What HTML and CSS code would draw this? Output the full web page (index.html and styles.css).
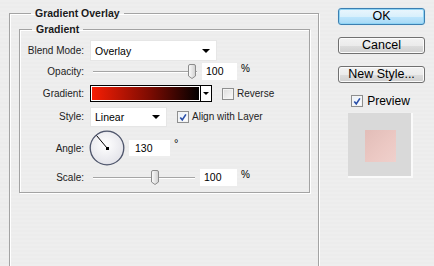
FILE: index.html
```html
<!DOCTYPE html>
<html lang="en">
<head>
  <meta charset="UTF-8">
  <title>Layer Style - Gradient Overlay</title>
  <link rel="stylesheet" href="styles.css">
</head>
<body>
  <div class="dialog">
    <fieldset class="group outer">
      <legend>Gradient Overlay</legend>
      <fieldset class="group inner">
        <legend>Gradient</legend>
        <div class="row r-blend">
          <span class="lbl">Blend Mode:</span>
          <div class="select wide"><span>Overlay</span><i class="arrow"></i></div>
        </div>
        <div class="row r-opacity">
          <span class="lbl">Opacity:</span>
          <div class="slider s-opacity">
            <div class="track"></div>
            <svg class="thumb" width="8" height="15" viewBox="0 0 8 15"><defs><linearGradient id="tg1" x1="0" y1="0" x2="1" y2="0"><stop offset="0" stop-color="#fdfdfd"/><stop offset="1" stop-color="#cfcfcf"/></linearGradient></defs><path d="M2 0.5h4a1.5 1.5 0 0 1 1.5 1.5v10l-3.5 2.5l-3.5-2.5v-10a1.5 1.5 0 0 1 1.5-1.5z" fill="url(#tg1)" stroke="#8c8c8c"/></svg>
          </div>
          <div class="field f-opacity">100</div>
          <span class="unit">%</span>
        </div>
        <div class="row r-gradient">
          <span class="lbl">Gradient:</span>
          <div class="swatch"></div>
          <div class="drop"><i class="arrow small"></i></div>
          <span class="check"></span>
          <span class="clabel">Reverse</span>
        </div>
        <div class="row r-style">
          <span class="lbl">Style:</span>
          <div class="select narrow"><span>Linear</span><i class="arrow"></i></div>
          <span class="check on"><svg width="11" height="11" viewBox="0 0 11 11"><path d="M2.5 5.5l2.2 2.6l4-6" fill="none" stroke="#2a4fa8" stroke-width="1.8"/></svg></span>
          <span class="clabel">Align with Layer</span>
        </div>
        <div class="row r-angle">
          <span class="lbl">Angle:</span>
          <svg class="dial" width="36" height="36" viewBox="0 0 36 36">
            <defs><radialGradient id="dg" cx="0.45" cy="0.4" r="0.6"><stop offset="0" stop-color="#ffffff"/><stop offset="1" stop-color="#e4e4ea"/></radialGradient></defs>
            <circle cx="18" cy="18" r="16.5" fill="url(#dg)" stroke="#c7c9d2" stroke-width="1"/>
            <circle cx="18" cy="18" r="16.8" fill="none" stroke="#4f566c" stroke-width="1.3"/>
            <line x1="7.6" y1="5.6" x2="18" y2="18" stroke="#000" stroke-width="1"/>
            <rect x="17" y="17" width="3" height="3" fill="#000"/>
          </svg>
          <div class="field f-angle">130</div>
          <span class="deg">°</span>
        </div>
        <div class="row r-scale">
          <span class="lbl">Scale:</span>
          <div class="slider s-scale">
            <div class="track"></div>
            <svg class="thumb" width="8" height="15" viewBox="0 0 8 15"><defs><linearGradient id="tg2" x1="0" y1="0" x2="1" y2="0"><stop offset="0" stop-color="#fdfdfd"/><stop offset="1" stop-color="#cfcfcf"/></linearGradient></defs><path d="M2 0.5h4a1.5 1.5 0 0 1 1.5 1.5v10l-3.5 2.5l-3.5-2.5v-10a1.5 1.5 0 0 1 1.5-1.5z" fill="url(#tg2)" stroke="#8c8c8c"/></svg>
          </div>
          <div class="field f-scale">100</div>
          <span class="unit">%</span>
        </div>
      </fieldset>
    </fieldset>
    <div class="side">
      <button class="btn default">OK</button>
      <button class="btn">Cancel</button>
      <button class="btn">New Style...</button>
      <div class="preview-toggle">
        <span class="check on"><svg width="11" height="11" viewBox="0 0 11 11"><path d="M2.5 5.5l2.2 2.6l4-6" fill="none" stroke="#2a4fa8" stroke-width="1.8"/></svg></span>
        <span>Preview</span>
      </div>
      <div class="preview"><div class="sample"></div></div>
    </div>
  </div>
</body>
</html>
```

FILE: styles.css
```css
html, body {
  margin: 0;
  width: 434px;
  height: 266px;
  overflow: hidden;
}
body {
  font-family: "Liberation Sans", Arial, sans-serif;
  font-size: 10px;
  color: #000;
  background: repeating-linear-gradient(to bottom, #eeeeee 0, #eeeeee 2px, #ececec 2px, #ececec 4px);
}
.dialog {
  display: flex;
  align-items: flex-start;
}
.group {
  margin: 0;
  padding: 0;
  min-inline-size: 0;
  border: 1px solid #a3a3a3;
  box-shadow: 1px 1px 0 #fff, inset 1px 1px 0 #fff;
}
.group legend {
  margin-left: 12px;
  padding: 0 4px;
  font-weight: bold;
  font-size: 10.5px;
  line-height: 13px;
  color: #1a1a1a;
}
.outer {
  margin: 7px 0 0 9px;
  width: 310px;
  height: 259px;
  box-sizing: border-box;
  padding: 3px 8px 0 9px;
  border-bottom: none;
}
.inner {
  padding: 4px 0 6px;
}
.row {
  display: flex;
  align-items: center;
}
.lbl {
  flex: none;
  width: 70px;
  padding-right: 6px;
  box-sizing: border-box;
  text-align: right;
  color: #222;
}
.r-blend { height: 21px; }
.r-opacity { height: 17px; margin-top: 2px; }
.r-gradient { height: 17px; margin-top: 5px; }
.r-style { height: 21px; margin-top: 4px; }
.r-angle { height: 36px; margin-top: 3px; }
.r-scale { height: 17px; margin-top: 3px; }

.select {
  display: flex;
  align-items: center;
  justify-content: space-between;
  box-sizing: border-box;
  height: 21px;
  padding: 0 6px 0 4px;
  background: #fff;
  border: 1px solid #e6e6e6;
  font-size: 10.5px;
}
.select.wide { width: 127px; }
.select.narrow { width: 77px; height: 20px; }
.arrow {
  width: 0;
  height: 0;
  border-left: 4px solid transparent;
  border-right: 4px solid transparent;
  border-top: 4px solid #000;
}
.arrow.small {
  border-left-width: 3px;
  border-right-width: 3px;
  border-top-width: 3px;
}

.slider {
  position: relative;
  height: 17px;
  flex: none;
}
.s-opacity { width: 109px; }
.s-scale { width: 107px; }
.track {
  position: absolute;
  left: 3px;
  right: 2px;
  top: 8px;
  height: 1px;
  background: #a5a5a5;
  border-bottom: 1px solid #fff;
}
.thumb {
  position: absolute;
  top: 1px;
}
.s-opacity .thumb { left: 98px; }
.s-scale .thumb { left: 61px; }

.field {
  box-sizing: border-box;
  height: 17px;
  line-height: 17px;
  padding-left: 4px;
  background: #fff;
  font-size: 10.5px;
}
.f-opacity { width: 35px; margin-left: 3px; }
.f-scale { width: 37px; margin-left: 3px; }
.f-angle { width: 41px; height: 16px; line-height: 16px; margin-left: 4px; padding-left: 6px; }
.unit { margin-left: 4px; margin-top: -6px; font-size: 10px; }
.deg { margin-left: 4px; margin-top: -10px; font-size: 11px; }

.swatch {
  box-sizing: border-box;
  width: 111px;
  height: 17px;
  border: 1px solid #000;
  background: linear-gradient(to right, #f81e04, #7a0b02 55%, #000);
  box-shadow: inset 0 0 0 1px #fff;
}
.drop {
  box-sizing: border-box;
  width: 11px;
  height: 17px;
  border: 1px solid #000;
  border-left: none;
  background: #fff;
  display: flex;
  align-items: center;
  justify-content: center;
}
.check {
  flex: none;
  box-sizing: border-box;
  width: 12px;
  height: 12px;
  border: 1px solid #8e8f8f;
  background: linear-gradient(135deg, #dcdcdc, #fbfbfb);
  box-shadow: inset 0 0 0 1px #f4f4f4;
  display: flex;
}
.check.on {
  background: linear-gradient(135deg, #e6eef8, #ffffff);
}
.r-gradient .check { margin-left: 10px; }
.r-style .check { margin-left: 10px; }
.clabel { margin-left: 3px; color: #222; }
.dial { margin-left: -1px; flex: none; }

.side {
  margin-left: 19px;
  padding-top: 8px;
  width: 87px;
  display: flex;
  flex-direction: column;
  align-items: center;
}
.btn {
  width: 87px;
  height: 17px;
  margin: 0 0 12px;
  padding: 0;
  border: 1px solid #707070;
  border-radius: 3px;
  background: linear-gradient(to bottom, #f2f2f2 0, #ebebeb 50%, #dddddd 51%, #cfcfcf 100%);
  box-shadow: inset 0 0 0 1px #fbfbfb;
  font-family: "Liberation Sans", Arial, sans-serif;
  font-size: 12.5px;
  line-height: 15px;
  color: #000;
}
.btn.default {
  border-color: #3c7fb1;
  background: linear-gradient(to bottom, #eaf6fd 0, #d9f0fc 50%, #bee6fd 51%, #a7d9f5 100%);
  box-shadow: inset 0 0 0 1px #8fd4f5, 0 0 1px #9fdcf7;
}
.preview-toggle {
  display: flex;
  align-items: center;
  gap: 4px;
  height: 12px;
  font-size: 12px;
  margin-right: 2px;
}
.preview {
  margin-top: 6px;
  margin-right: 2px;
  box-sizing: border-box;
  width: 65px;
  height: 65px;
  background: #d9d9d9;
  border-right: 2px solid #fafafa;
  border-bottom: 2px solid #fafafa;
  padding: 17px 0 0 17px;
}
.sample {
  width: 31px;
  height: 32px;
  background: linear-gradient(135deg, #e2bdb8, #ecc9c4 60%, #efd0cc);
}
```
